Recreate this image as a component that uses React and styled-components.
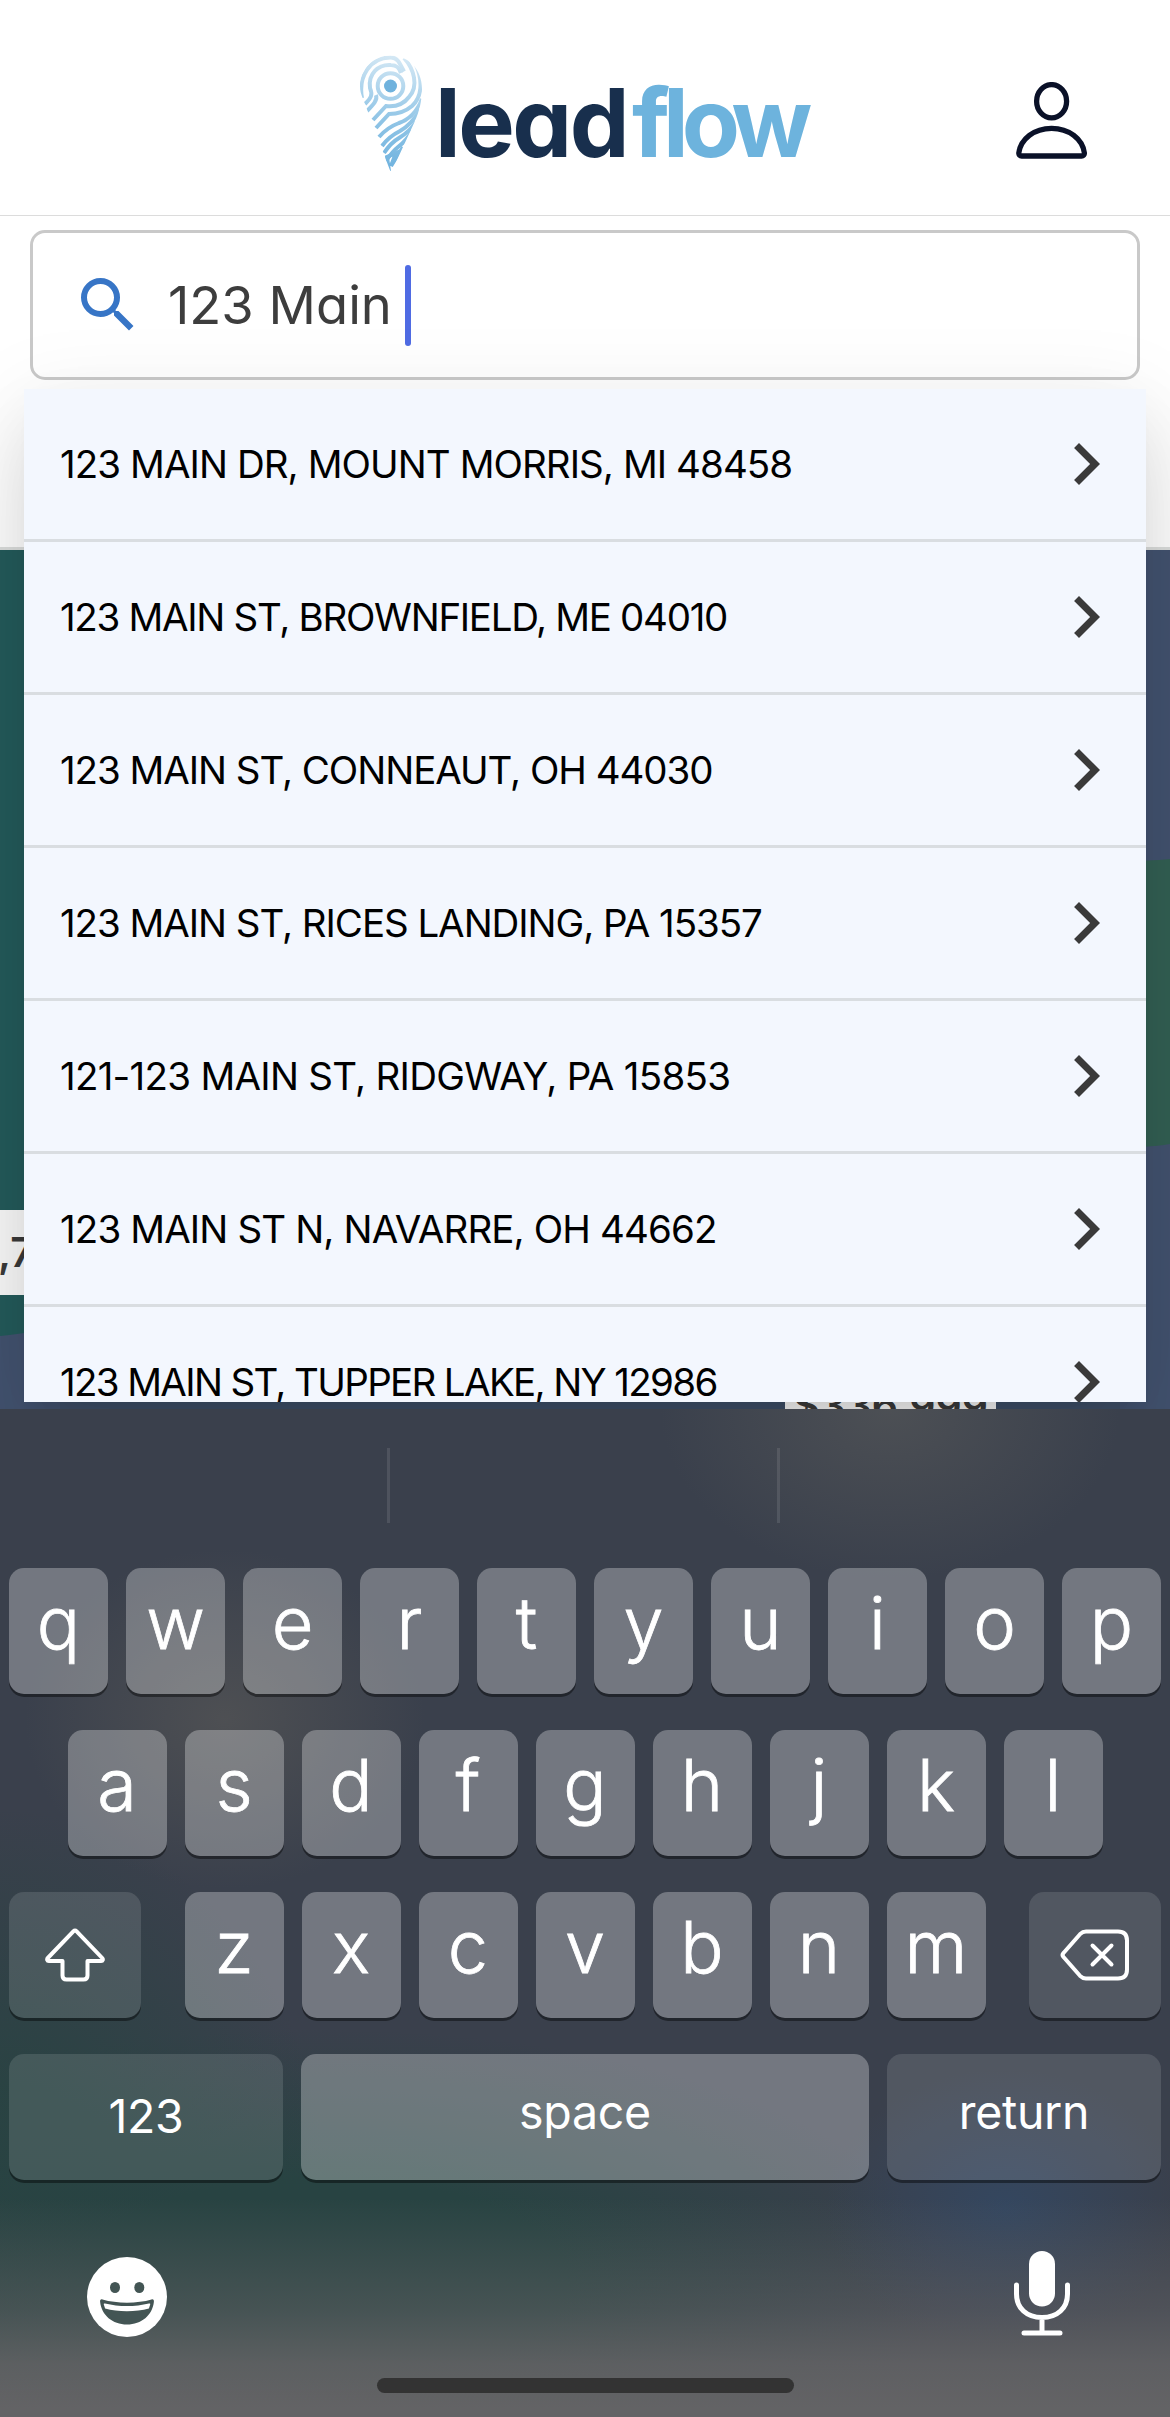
import React from 'react';
import styled, { createGlobalStyle } from 'styled-components';

const GlobalStyle = createGlobalStyle`
  * { box-sizing: border-box; }
  body {
    margin: 0;
    background: #fff;
    font-family: Inter, "Open Sans", sans-serif;
  }
  svg { display: block; flex: none; }
`;

const Page = styled.main`
  display: flex;
  flex-direction: column;
  width: 1170px;
  height: 2417px;
  overflow: hidden;
`;

const Header = styled.header`
  display: grid;
  grid-template-columns: 360px 1fr 154px;
  height: 216px;
  border-bottom: 1px solid #dcdcdc;
`;

const Logo = styled.div`
  grid-column: 2;
  display: flex;
  padding-top: 55px;
`;

const Wordmark = styled.span`
  margin: 12px 0 0 13px;
  font-size: 95px;
  line-height: 112px;
  font-weight: 700;
  letter-spacing: -2.5px;
  font-feature-settings: "cv11";
  white-space: nowrap;
  color: #182f4d;
`;

const Flow = styled.span`
  margin-left: 5px;
  letter-spacing: -7px;
  color: #6db3dd;
`;

const Account = styled.div`
  padding-top: 82px;
`;

const SearchPanel = styled.section`
  position: relative;
  height: 334px;
  padding: 14px 30px 0;
  background: #fff;
  border-bottom: 3px solid #dcdedd;
`;

const SearchBox = styled.div`
  display: flex;
  align-items: center;
  height: 150px;
  padding: 0 39px;
  border: 3px solid #c9c9c9;
  border-radius: 15px;
`;

const Query = styled.span`
  width: 236px;
  padding-left: 24px;
  font-size: 52.5px;
  letter-spacing: 0;
  font-feature-settings: "cv11";
  white-space: pre;
  color: #3d3d3d;
`;

const Caret = styled.span`
  width: 6px;
  height: 81px;
  margin-left: 25px;
  border-radius: 3px;
  background: #4f6be3;
`;

const Suggestions = styled.ul`
  position: absolute;
  z-index: 1;
  top: 173px;
  left: 24px;
  width: 1122px;
  height: 1013px;
  margin: 0;
  padding: 0;
  overflow: hidden;
  list-style: none;
  background: #f3f7fe;
  box-shadow: 0 15px 15px -9px rgba(0, 0, 0, 0.06), 0 48px 72px 3px rgba(0, 0, 0, 0.1),
    0 18px 84px 6px rgba(0, 0, 0, 0.08);
`;

const Suggestion = styled.li`
  display: flex;
  align-items: center;
  justify-content: space-between;
  height: 153px;
  padding: 0 18px 0 36px;
  border-bottom: 3px solid #d9dde1;
  font-size: 38.5px;
  letter-spacing: ${(p) => p.$spacing}px;
  white-space: nowrap;
  color: #000;
`;

const Map = styled.section`
  position: relative;
  height: 859px;
  overflow: hidden;
  background: #435370;
`;

const MapShapes = styled.svg`
  width: 1170px;
  height: 859px;
`;

const PriceTag = styled.div`
  position: absolute;
  top: ${(p) => p.$top}px;
  left: ${(p) => p.$left}px;
  width: ${(p) => p.$width}px;
  height: 85px;
  line-height: 85px;
  background: #fafafa;
  text-align: center;
  font-size: 41px;
  font-weight: 600;
  white-space: nowrap;
  color: #3a3a3a;
`;

const Keyboard = styled.section`
  position: relative;
  z-index: 2;
  display: flex;
  flex-direction: column;
  height: 1008px;
  background:
    linear-gradient(180deg, rgba(99, 99, 101, 0) 790px, rgba(99, 99, 101, 0.5) 900px, rgba(99, 99, 101, 0.88) 955px, #636365 1000px),
    radial-gradient(ellipse 230px 170px at 890px 0, rgba(84, 86, 88, 0.7), rgba(70, 77, 83, 0)),
    radial-gradient(ellipse 200px 170px at 225px 310px, rgba(86, 86, 86, 0.7), rgba(70, 77, 83, 0)),
    radial-gradient(ellipse 180px 140px at 1005px 800px, rgba(50, 73, 102, 0.75), rgba(50, 73, 102, 0)),
    radial-gradient(ellipse 330px 400px at 0 800px, rgba(40, 67, 66, 0.9) 30%, rgba(40, 67, 66, 0)),
    radial-gradient(ellipse 620px 250px at 320px 870px, rgba(40, 67, 66, 1) 40%, rgba(40, 67, 66, 0)),
    #3a404c;
`;

const Predictions = styled.div`
  display: grid;
  grid-template-columns: 390px 390px 390px;
  height: 75px;
  margin: 39px 0 45px;
`;

const Prediction = styled.div`
  border-right: 3px solid ${(p) => (p.$last ? 'transparent' : 'rgba(255, 255, 255, 0.1)')};
`;

const KeyRow = styled.div`
  display: flex;
  justify-content: ${(p) => (p.$spread ? 'space-between' : 'center')};
  gap: ${(p) => (p.$spread ? 0 : 18)}px;
  padding: 0 9px;
  margin-bottom: 36px;
`;

const KeyGroup = styled.div`
  display: flex;
  gap: 18px;
`;

const Key = styled.div`
  display: flex;
  flex: none;
  align-items: center;
  justify-content: center;
  width: ${(p) => p.$width || 99}px;
  height: 126px;
  padding-bottom: ${(p) => p.$lift ?? 16}px;
  border-radius: 15px;
  background: rgba(255, 255, 255, ${(p) => (p.$dark ? 0.12 : 0.29)});
  box-shadow: 0 3px 0 rgba(0, 0, 0, 0.42);
  font-size: ${(p) => (p.$label ? 46.5 : 72)}px;
  font-weight: ${(p) => (p.$label ? 400 : 300)};
  letter-spacing: ${(p) => (p.$label ? -0.3 : 0)}px;
  -webkit-text-stroke: ${(p) => (p.$label ? 0 : 0.8)}px #fff;
  line-height: 1.2;
  color: #fff;
`;

const BottomBar = styled.div`
  display: flex;
  align-items: flex-start;
  justify-content: space-between;
  height: 162px;
  padding: 35px 100px 0 87px;
`;

const EmojiKey = styled.div`
  padding-top: 6px;
`;

const HomeIndicator = styled.div`
  width: 417px;
  height: 15px;
  margin: 0 auto;
  border-radius: 8px;
  background: #333;
`;

const addresses = [
  { text: '123 MAIN DR, MOUNT MORRIS, MI 48458', spacing: -0.93 },
  { text: '123 MAIN ST, BROWNFIELD, ME 04010', spacing: -1.3 },
  { text: '123 MAIN ST, CONNEAUT, OH 44030', spacing: -1.05 },
  { text: '123 MAIN ST, RICES LANDING, PA 15357', spacing: -1.05 },
  { text: '121-123 MAIN ST, RIDGWAY, PA 15853', spacing: -0.73 },
  { text: '123 MAIN ST N, NAVARRE, OH 44662', spacing: -0.87 },
  { text: '123 MAIN ST, TUPPER LAKE, NY 12986', spacing: -1.65 },
];

function PinIcon() {
  return (
    <svg width="62" height="118" viewBox="0 0 62 118" fill="none">
      <defs>
        <linearGradient id="pin" x1="40" y1="0" x2="20" y2="118" gradientUnits="userSpaceOnUse">
          <stop offset="0" stopColor="#d6e9f5" />
          <stop offset="0.55" stopColor="#91c5e6" />
          <stop offset="1" stopColor="#6cb1de" />
        </linearGradient>
        <clipPath id="pinShape">
          <path d="M31 .5C13 .5 0 14 0 31c0 5 1 8 3 13l28 74 24-52c4-9 7-20 7-32C62 14 48 .5 31 .5z" />
        </clipPath>
      </defs>
      <g clipPath="url(#pinShape)" stroke="url(#pin)" strokeWidth="4">
        <circle cx="30.500" cy="31" r="12.800" />
        <path d="M5 49c6-6 8-9 5-16C8 19 18 9 31 10c6 0 8 3 10 8" />
        <path d="M2 43C-2 22 10 2 31 2.500c6 0 8 4 13 14" />
        <path d="M44 3c10 11 15 28 5 39-6 8-14 10-23 9l-13 14" />
        <path d="M56 10c7 16 6 32-4 41-7 6-15 8-23 8L16 73" />
        <path d="M7 56c6-6 11-11 9-16" />
        <path d="M62 44c-5 13-14 21-23 24-8 3-14 7-20 14" />
        <path d="M60 55c-7 12-13 17-20 21-8 4-13 8-18 15" />
        <path d="M56 67c-6 9-12 13-17 16-7 4-11 9-15 15" />
        <path d="M52 76c-5 9-10 13-14 16-5 4-8 8-12 14" />
        <path d="m29 116-2-14 9-4-5 13 12-19" />
      </g>
      <circle cx="30.500" cy="31" r="6.500" fill="#6fb2dd" />
    </svg>
  );
}

function PersonIcon() {
  return (
    <svg width="72" height="77" viewBox="0 0 72 77" fill="none" stroke="#0a1128" strokeWidth="5.300">
      <ellipse cx="35.600" cy="19.200" rx="15" ry="16.600" />
      <path d="M5.600 74h60a2.800 2.800 0 0 0 2.800-3C66.500 57 53 46.400 35.600 46.400S4.700 57 2.800 71a2.800 2.800 0 0 0 2.800 3z" />
    </svg>
  );
}

function SearchIcon() {
  return (
    <svg width="72" height="72" viewBox="0 0 24 24" fill="#3775c6">
      <path d="M15.500 14h-.79l-.28-.27A6.471 6.471 0 0 0 16 9.500 6.500 6.500 0 1 0 9.500 16c1.610 0 3.090-.59 4.230-1.570l.27.28v.79l5 4.990L20.490 19l-4.990-5zm-6 0C7.010 14 5 11.990 5 9.500S7.010 5 9.500 5 14 7.010 14 9.500 11.990 14 9.500 14z" />
    </svg>
  );
}

function ChevronIcon() {
  return (
    <svg width="84" height="84" viewBox="0 0 24 24" fill="#3a3a3a">
      <path d="M10 6 8.590 7.410 13.170 12l-4.580 4.590L10 18l6-6z" />
    </svg>
  );
}

function ShiftIcon() {
  return (
    <svg width="60" height="54" viewBox="0 0 60 54" fill="none" stroke="#fff" strokeWidth="4" strokeLinejoin="round">
      <path d="M28.600 3.200 2.800 30c-1.200 1.300-.6 3 1 3h13.700v14.500c0 2.500 1.300 4 4 4h17c2.700 0 4-1.500 4-4V33h13.700c1.600 0 2.200-1.700 1-3L31.400 3.200c-.9-1-1.900-1-2.800 0z" />
    </svg>
  );
}

function DeleteIcon() {
  return (
    <svg width="70" height="52" viewBox="0 0 70 52" fill="none" stroke="#fff" strokeWidth="4" strokeLinecap="round" strokeLinejoin="round">
      <path d="M26 2.500h32c6 0 9 3 9 9v29c0 6-3 9-9 9H26c-2.500 0-4-.7-6-2.700L3.500 28c-1.400-1.400-1.400-2.600 0-4L20 5.200c2-2 3.500-2.700 6-2.700z" />
      <path d="m32.500 16.500 19 19M51.500 16.500l-19 19" />
    </svg>
  );
}

function EmojiIcon() {
  return (
    <svg width="80" height="80" viewBox="0 0 80 80">
      <circle cx="40" cy="40" r="40" fill="#fff" />
      <g fill="#435554">
        <ellipse cx="28" cy="30.500" rx="5" ry="5.600" />
        <ellipse cx="52.300" cy="30.500" rx="5" ry="5.600" />
        <path d="M15.500 42.500c14 4.200 35 4.200 49 0 1.800-.5 2.600.5 2.400 2.200C65.500 58 54.500 67.500 40 67.500S14.500 58 13.100 44.700c-.2-1.700.6-2.700 2.400-2.200z" />
      </g>
      <path d="M18 46.500c14 3.400 30 3.400 44 0 1-.2 1.400.2 1.200 1l-1.300 4c-13 3.600-31 3.600-43.800 0l-1.300-4c-.2-.8.2-1.200 1.200-1z" fill="#fff" />
    </svg>
  );
}

function MicIcon() {
  return (
    <svg width="56" height="85" viewBox="0 0 56 85" fill="none" stroke="#fff" strokeWidth="5" strokeLinecap="round">
      <rect x="15" y="0" width="26" height="55.500" rx="13" fill="#fff" stroke="none" />
      <path d="M2.500 34v9c0 14 10 23.500 25.500 23.500S53.500 57 53.500 43v-9M28 67v14M10 82h36" />
    </svg>
  );
}

function Letters({ keys }) {
  return keys.split('').map((letter) => <Key key={letter}>{letter}</Key>);
}

export default function App() {
  return (
    <Page>
      <GlobalStyle />
      <Header>
        <Logo>
          <PinIcon />
          <Wordmark>lead<Flow>flow</Flow></Wordmark>
        </Logo>
        <Account><PersonIcon /></Account>
      </Header>
      <SearchPanel>
        <SearchBox>
          <SearchIcon />
          <Query>123 Main </Query>
          <Caret />
        </SearchBox>
        <Suggestions>
          {addresses.map(({ text, spacing }) => (
            <Suggestion key={text} $spacing={spacing}>
              {text}
              <ChevronIcon />
            </Suggestion>
          ))}
        </Suggestions>
      </SearchPanel>
      <Map>
        <MapShapes viewBox="0 0 1170 859">
          <path d="M0 0h60v780C40 780 20 784 0 786z" fill="#245b5b" />
          <path d="M1120 312c20-2 36-1 50-3v285c-16 3-34 2-50 6z" fill="#336054" />
          <path d="M60 840h1060v19H60z" fill="#3f5069" />
        </MapShapes>
        <PriceTag $top={660} $left={-4} $width={40}>,7</PriceTag>
        <PriceTag $top={813} $left={785} $width={211}>$336,999</PriceTag>
      </Map>
      <Keyboard>
        <Predictions>
          <Prediction />
          <Prediction />
          <Prediction $last />
        </Predictions>
        <KeyRow><Letters keys="qwertyuiop" /></KeyRow>
        <KeyRow><Letters keys="asdfghjkl" /></KeyRow>
        <KeyRow $spread>
          <Key $width={132} $dark $lift={0}><ShiftIcon /></Key>
          <KeyGroup><Letters keys="zxcvbnm" /></KeyGroup>
          <Key $width={132} $dark $lift={0}><DeleteIcon /></Key>
        </KeyRow>
        <KeyRow>
          <Key $width={274} $dark $label $lift={0}>123</Key>
          <Key $width={568} $label $lift={8}>space</Key>
          <Key $width={274} $dark $label $lift={8}>return</Key>
        </KeyRow>
        <BottomBar>
          <EmojiKey><EmojiIcon /></EmojiKey>
          <MicIcon />
        </BottomBar>
        <HomeIndicator />
      </Keyboard>
    </Page>
  );
}
